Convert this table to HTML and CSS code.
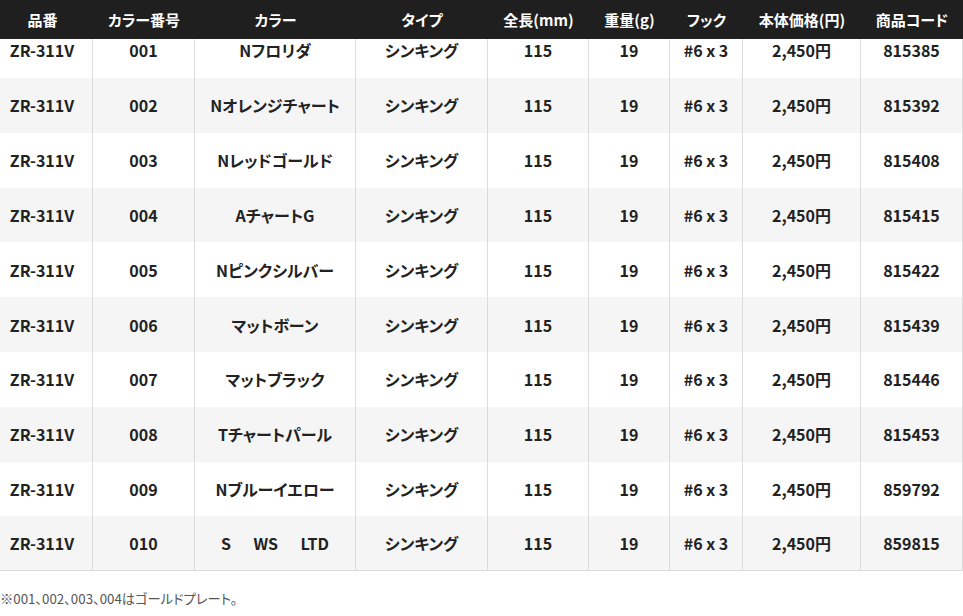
FILE: index.html
```html
<!DOCTYPE html>
<html lang="ja">
<head>
<meta charset="utf-8">
<title>ZR-311V</title>
<link rel="stylesheet" href="styles.css">
</head>
<body>
<table class="spec">
  <colgroup>
    <col class="c1"><col class="c2"><col class="c3"><col class="c4"><col class="c5"><col class="c6"><col class="c7"><col class="c8"><col class="c9">
  </colgroup>
  <thead>
    <tr><th>品番</th><th>カラー番号</th><th>カラー</th><th>タイプ</th><th>全長(mm)</th><th>重量(g)</th><th>フック</th><th>本体価格(円)</th><th>商品コード</th></tr>
  </thead>
  <tbody>
    <tr class="first"><td>ZR-311V</td><td>001</td><td>Nフロリダ</td><td>シンキング</td><td>115</td><td>19</td><td>#6 x 3</td><td>2,450円</td><td>815385</td></tr>
    <tr><td>ZR-311V</td><td>002</td><td>Nオレンジチャート</td><td>シンキング</td><td>115</td><td>19</td><td>#6 x 3</td><td>2,450円</td><td>815392</td></tr>
    <tr><td>ZR-311V</td><td>003</td><td>Nレッドゴールド</td><td>シンキング</td><td>115</td><td>19</td><td>#6 x 3</td><td>2,450円</td><td>815408</td></tr>
    <tr><td>ZR-311V</td><td>004</td><td>AチャートG</td><td>シンキング</td><td>115</td><td>19</td><td>#6 x 3</td><td>2,450円</td><td>815415</td></tr>
    <tr><td>ZR-311V</td><td>005</td><td>Nピンクシルバー</td><td>シンキング</td><td>115</td><td>19</td><td>#6 x 3</td><td>2,450円</td><td>815422</td></tr>
    <tr><td>ZR-311V</td><td>006</td><td>マットボーン</td><td>シンキング</td><td>115</td><td>19</td><td>#6 x 3</td><td>2,450円</td><td>815439</td></tr>
    <tr><td>ZR-311V</td><td>007</td><td>マットブラック</td><td>シンキング</td><td>115</td><td>19</td><td>#6 x 3</td><td>2,450円</td><td>815446</td></tr>
    <tr><td>ZR-311V</td><td>008</td><td>Tチャートパール</td><td>シンキング</td><td>115</td><td>19</td><td>#6 x 3</td><td>2,450円</td><td>815453</td></tr>
    <tr><td>ZR-311V</td><td>009</td><td>Nブルーイエロー</td><td>シンキング</td><td>115</td><td>19</td><td>#6 x 3</td><td>2,450円</td><td>859792</td></tr>
    <tr class="last"><td>ZR-311V</td><td>010</td><td>S<span class="wsp">　</span>WS<span class="wsp">　</span>LTD</td><td>シンキング</td><td>115</td><td>19</td><td>#6 x 3</td><td>2,450円</td><td>859815</td></tr>
  </tbody>
</table>
<p class="note">※001、002、003、004はゴールドプレート。</p>
</body>
</html>
```

FILE: styles.css
```css
html, body {
  margin: 0;
  padding: 0;
  background: #fff;
}
body {
  font-family: "Noto Sans CJK JP", "Noto Sans", sans-serif;
  color: #222;
  overflow-x: hidden;
}
.spec {
  width: 971px;
  margin-left: -8px;
  table-layout: fixed;
  border-collapse: separate;
  border-spacing: 0;
  font-feature-settings: "palt";
}
.c1 { width: 101px; }
.c2 { width: 102px; }
.c3 { width: 161px; }
.c4 { width: 132px; }
.c5 { width: 101px; }
.c6 { width: 81px; }
.c7 { width: 73px; }
.c8 { width: 118px; }
.c9 { width: 102px; }
.spec th {
  height: 39px;
  padding: 0;
  background: #1f1f1f;
  color: #fff;
  font-size: 15px;
  font-weight: 700;
  text-align: center;
  vertical-align: middle;
  line-height: 20px;
}
.spec td {
  height: 54.8px;
  padding: 0;
  border-right: 1px solid #dcdcdc;
  font-size: 16px;
  font-weight: 700;
  text-align: center;
  vertical-align: middle;
  line-height: 22px;
  box-sizing: border-box;
}
.spec .wsp {
  font-feature-settings: normal;
  display: inline-block;
  width: 1.4em;
}
.spec tbody tr:nth-child(even) td {
  background: #f5f5f5;
}
.spec tr.first td {
  height: 39px;
  vertical-align: top;
}
.spec tr.last td {
  border-bottom: 1px solid #dcdcdc;
}
.note {
  margin: 18px 0 0;
  font-size: 13.3px;
  line-height: 20px;
  color: #555;
  font-feature-settings: "palt";
}
```
